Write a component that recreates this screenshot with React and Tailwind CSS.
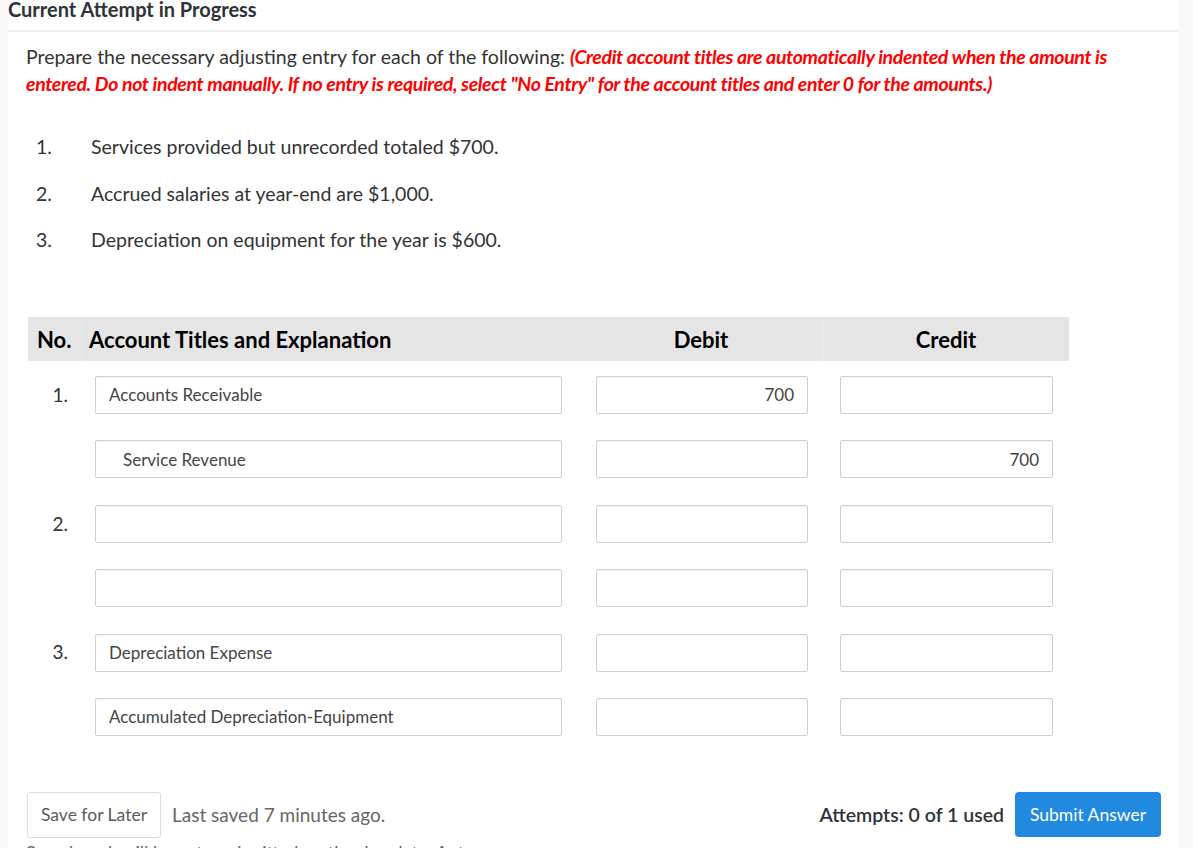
import React from 'react';

const ITEMS = [
  'Services provided but unrecorded totaled $700.',
  'Accrued salaries at year-end are $1,000.',
  'Depreciation on equipment for the year is $600.',
];

const ROWS = [
  { no: '1.', account: 'Accounts Receivable', debit: '700', credit: '' },
  { no: '', account: 'Service Revenue', indent: true, debit: '', credit: '700' },
  { no: '2.', account: '', debit: '', credit: '' },
  { no: '', account: '', debit: '', credit: '' },
  { no: '3.', account: 'Depreciation Expense', debit: '', credit: '' },
  { no: '', account: 'Accumulated Depreciation-Equipment', debit: '', credit: '' },
];

function Field({ value, align = 'left', indent, className = '' }) {
  return (
    <div
      className={`h-[38px] border border-[#cfcfcf] bg-white rounded-[2px] flex items-center text-[17px] text-[#444] shadow-[inset_0_1px_1px_rgba(0,0,0,0.04)] ${
        align === 'right' ? 'justify-end pr-[13px]' : indent ? 'pl-[27px]' : 'pl-[13px]'
      } ${className}`}
    >
      {value}
    </div>
  );
}

export default function App() {
  return (
    <div className="min-h-[848px] bg-[#f8f8f8] flex font-['Lato','Open_Sans',sans-serif] text-[#333]">
      <div className="ml-[8px] w-[1171px] bg-white overflow-hidden h-[848px]">
        {/* Title */}
        <div className="h-[32px] border-b-[2px] border-[#eeeeee] flex items-start">
          <h2 className="text-[20px] font-bold leading-[20px] text-[#2d3338] -mt-[1px]">Current Attempt in Progress</h2>
        </div>

        <div className="pl-[18px] pr-[16px]">
          {/* Prompt */}
          <p className="mt-[11px] text-[19.5px] leading-[27px] text-[#333]">
            Prepare the necessary adjusting entry for each of the following:{' '}
            <span className="italic font-bold text-[#ff0000] tracking-[-0.35px]">
              (Credit account titles are automatically indented when the amount is entered. Do not indent manually. If no entry is required, select "No Entry" for the account titles and enter 0 for the amounts.)
            </span>
          </p>

          {/* Items */}
          <div className="mt-[36px] flex flex-col gap-[19.5px]">
            {ITEMS.map((t, i) => (
              <div key={i} className="flex items-center text-[19.5px] leading-[27px]">
                <span className="w-[65px] pl-[10px]">{i + 1}.</span>
                <span>{t}</span>
              </div>
            ))}
          </div>

          {/* Journal table */}
          <div className="mt-[64px] ml-[2px] w-[1041px]">
            <div className="grid grid-cols-[54px_498px_243px_246px] h-[44px] bg-[#e5e5e5] text-[22px] font-bold text-black items-center">
              <div className="h-full flex items-center pl-[9px] border-r border-[#ececec]">No.</div>
              <div className="pl-[7px]">Account Titles and Explanation</div>
              <div className="h-full flex items-center justify-center border-r border-[#efefef]">Debit</div>
              <div className="text-center">Credit</div>
            </div>

            <div className="pt-[15px] flex flex-col gap-[26.4px]">
              {ROWS.map((r, i) => (
                <div key={i} className="grid grid-cols-[54px_498px_243px_246px] items-center">
                  <div className="text-right pr-[14px] text-[19px] text-[#333]">{r.no}</div>
                  <Field value={r.account} indent={r.indent} className="ml-[13px] w-[467px]" />
                  <Field value={r.debit} align="right" className="ml-[16px] w-[212px]" />
                  <Field value={r.credit} align="right" className="ml-[17px] w-[213px]" />
                </div>
              ))}
            </div>
          </div>

          {/* Footer */}
          <div className="mt-[56px] flex items-center">
            <button className="h-[46px] w-[134px] ml-[1px] border border-[#dcdcdc] rounded-[3px] bg-white text-[17.5px] text-[#5b5b5b]">
              Save for Later
            </button>
            <span className="ml-[11px] text-[19px] text-[#666]">Last saved 7 minutes ago.</span>
            <span className="ml-auto text-[19.5px] font-semibold text-[#2d3338]">Attempts: 0 of 1 used</span>
            <button className="ml-[11px] mr-[2px] h-[45px] w-[146px] rounded-[4px] bg-[#218ae0] text-white text-[17.5px]">
              Submit Answer
            </button>
          </div>
          <p className="mt-[1px] text-[18px] text-[#666]">Saved work will be auto-submitted on the due date. Auto-</p>
        </div>
      </div>
    </div>
  );
}
